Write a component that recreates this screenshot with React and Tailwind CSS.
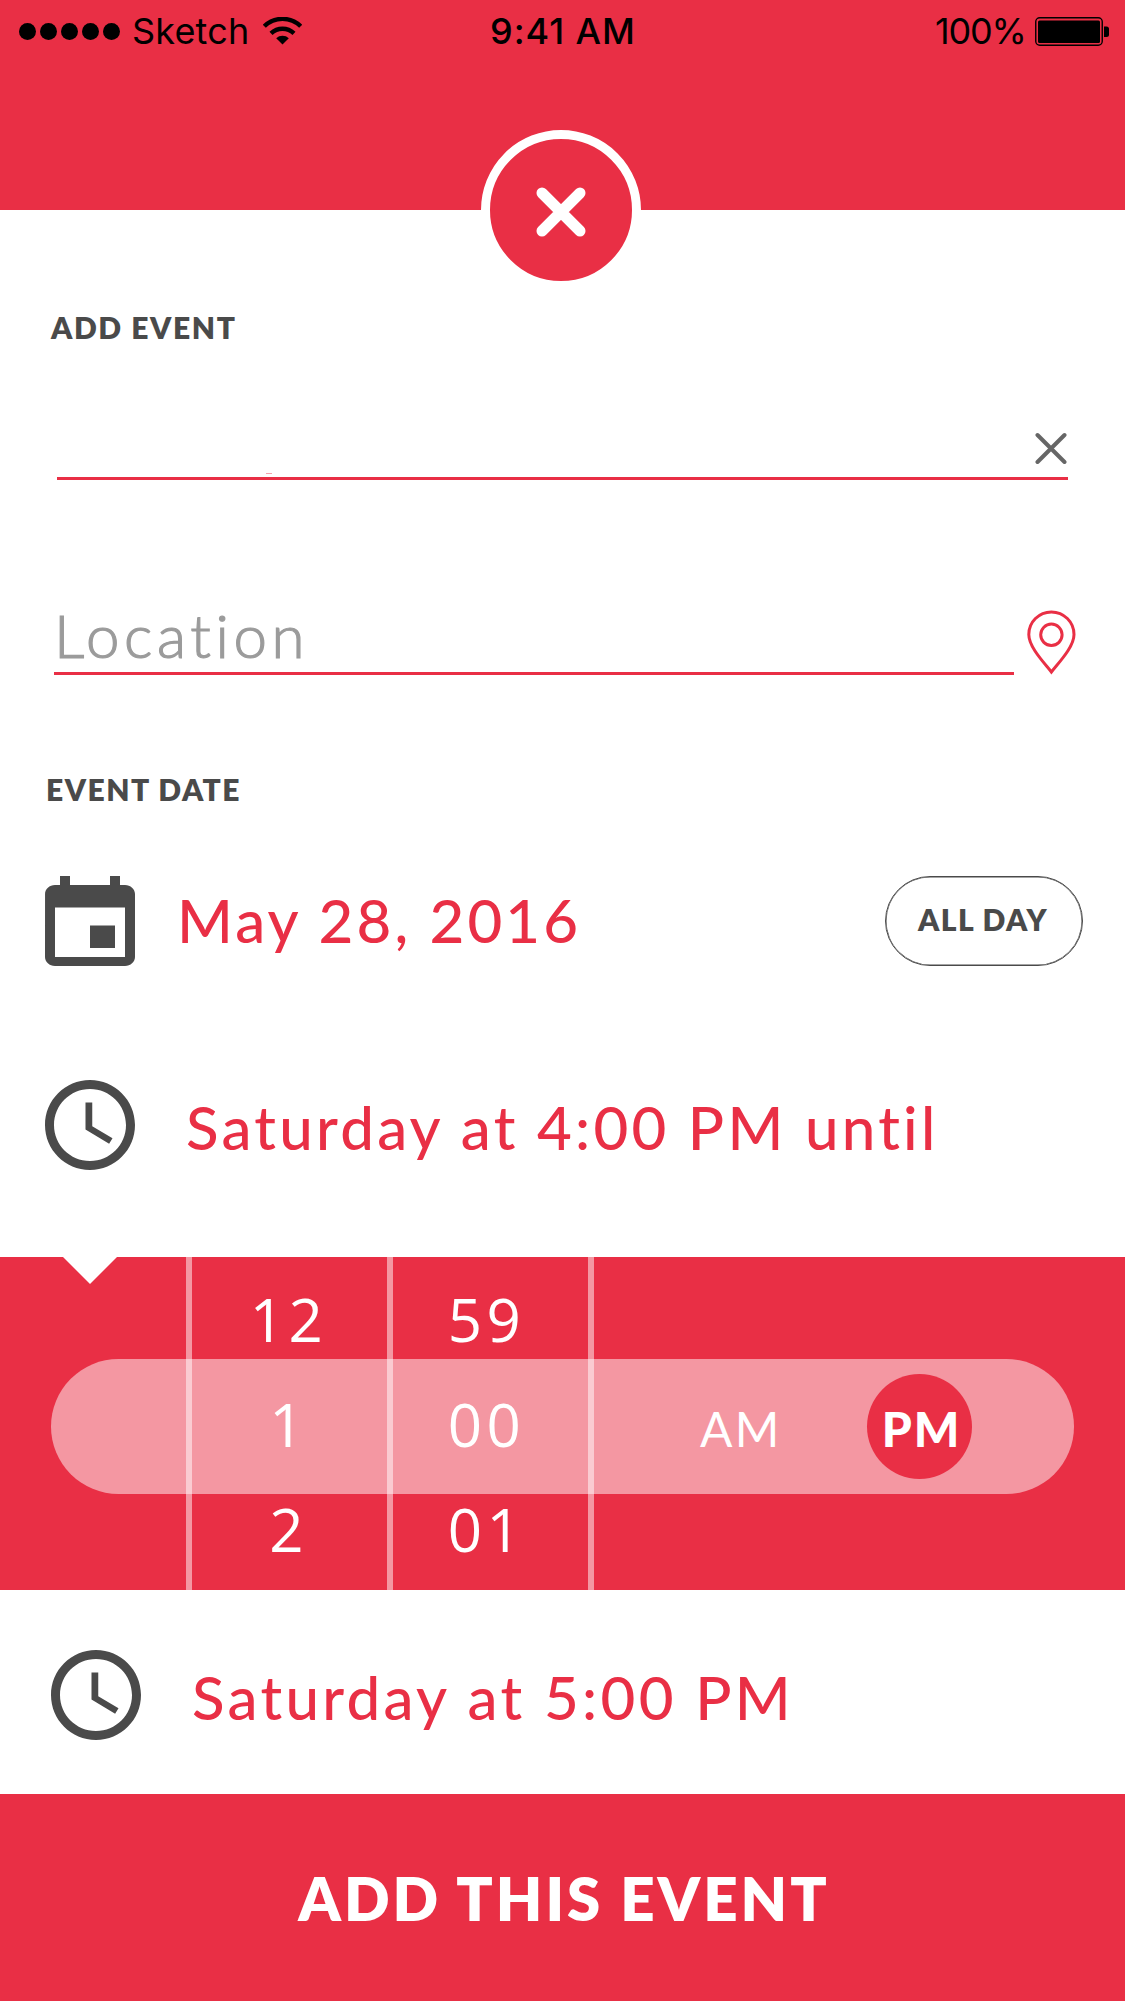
import React from "react";

const LATO = "font-['Lato','Open_Sans',sans-serif]";

function Wifi() {
  return (
    <svg className="h-[28px] w-[39px]" viewBox="0 0 39 28" fill="none">
      <path d="M1.3 9.3a26 26 0 0 1 36.4 0" stroke="#000" strokeWidth="4.4" />
      <path d="M8 16.3a16.8 16.8 0 0 1 23 0" stroke="#000" strokeWidth="4.4" />
      <path d="M13.2 21.2a9.4 9.4 0 0 1 12.6 0L19.5 27.5z" fill="#000" />
    </svg>
  );
}

function Battery() {
  return (
    <svg className="h-[29px] w-[75px]" viewBox="0 0 75 29">
      <rect x="0.75" y="0.75" width="66.5" height="27.5" rx="4" fill="none" stroke="#000" strokeWidth="1.4" />
      <rect x="3" y="3.5" width="62" height="22.5" rx="1.5" />
      <path d="M69 9.5h2.5a2.5 2.5 0 0 1 2.5 2.5v5.5a2.5 2.5 0 0 1-2.5 2.5H69z" />
    </svg>
  );
}

function Clock() {
  return (
    <svg className="size-[90px] shrink-0 fill-[#4a4a4a]" viewBox="2 2 20 20">
      <path d="M11.99 2C6.47 2 2 6.48 2 12s4.47 10 9.99 10C17.52 22 22 17.52 22 12S17.52 2 11.99 2zM12 20c-4.42 0-8-3.58-8-8s3.58-8 8-8 8 3.58 8 8-3.58 8-8 8zm.5-13H11v6l5.25 3.15.75-1.23-4.5-2.67z" />
    </svg>
  );
}

function Calendar() {
  return (
    <svg className="size-[90px] shrink-0 fill-[#4a4a4a]" viewBox="3 1 18 20" preserveAspectRatio="none">
      <path d="M17 12h-5v5h5v-5zM16 1v2H8V1H6v2H5c-1.11 0-1.99.9-1.99 2L3 19c0 1.1.89 2 2 2h14c1.1 0 2-.9 2-2V5c0-1.1-.9-2-2-2h-1V1h-2zm3 18H5V8h14v11z" />
    </svg>
  );
}

function PickerColumn({ values, className }) {
  return (
    <div
      className={`flex w-[201px] flex-col items-center gap-[45px] border-l-6 border-white/50 pt-[32px] font-['Open_Sans',sans-serif] text-[60px] leading-none font-medium tracking-[4.4px] ${className}`}
    >
      {values.map((v) => (
        <span key={v} className="relative">{v}</span>
      ))}
    </div>
  );
}

export default function App() {
  return (
    <div className={`flex h-[2001px] w-[1125px] flex-col overflow-hidden bg-white text-[#4a4a4a] ${LATO}`}>
      <header className="relative h-[210px] bg-[#e92f45]">
        <div className="grid h-[62px] grid-cols-[490px_445px_1fr] items-center font-['Inter',sans-serif] text-[36px] leading-none text-black">
          <div className="flex items-center pl-[19px]">
            <div className="flex gap-1">
              {[0, 1, 2, 3, 4].map((i) => (
                <span key={i} className="size-[17px] rounded-full bg-black" />
              ))}
            </div>
            <span className="ml-[12px] w-[131px] tracking-[0.19px]">Sketch</span>
            <Wifi />
          </div>
          <span className="font-medium tracking-[0.95px]">9:41 AM</span>
          <div className="flex items-center">
            <span className="w-[100px] tracking-[-1.19px]">100%</span>
            <Battery />
          </div>
        </div>
        <button className="absolute top-[130px] left-[481px] flex size-[160px] items-center justify-center rounded-full border-9 border-white bg-[#e92f45]">
          <svg className="mt-[3px] size-[50px]" viewBox="0 0 50 50" stroke="#fff" strokeWidth="11" strokeLinecap="round">
            <path d="M6 6l38 38M44 6L6 44" />
          </svg>
        </button>
      </header>

      <main className="h-[1047px] pt-[102px]">
        <h1 className="pl-[51px] text-[30px] leading-none font-extrabold tracking-[1.6px]">ADD EVENT</h1>
        <div className="ml-[57px] flex h-[138px] w-[1011px] items-end justify-between border-b-3 border-[#e92f45]">
          <span className="mb-[3px] ml-[209px] h-px w-[6px] bg-[#f4a3ad]" />
          <svg className="mr-px mb-[13px] size-[32px]" viewBox="0 0 32 32" stroke="#666" strokeWidth="4" strokeLinecap="round">
            <path d="M2.5 3l27 27M29.5 3l-27 27" />
          </svg>
        </div>
        <div className="flex h-[195px] items-end pl-[54px]">
          <div className="w-[960px] border-b-3 border-[#e92f45] pb-[7px] text-[60px] leading-none font-light tracking-[4.6px] text-[#9b9b9b] [-webkit-text-stroke:1.2px_#9b9b9b]">
            Location
          </div>
          <svg className="ml-[13px] h-[65px] w-[49px]" viewBox="0 0 49 65" fill="none" stroke="#e92f45" strokeWidth="3">
            <path d="M24.4 62C17 52.500 1.800 37 1.800 24.500a22.600 22.600 0 0 1 45.200 0C47 37 31.800 52.500 24.400 62z" />
            <circle cx="24.400" cy="24.800" r="10.700" />
          </svg>
        </div>
        <h2 className="mt-[99px] pl-[46px] text-[30px] leading-none font-extrabold tracking-[1.5px]">EVENT DATE</h2>
        <div className="mt-[72px] flex h-[90px] items-start pr-[42px] pl-[45px]">
          <Calendar />
          <span className="mt-[14px] ml-[42px] text-[60px] leading-none font-medium tracking-[3.12px] text-[#e92f45]">
            May 28, 2016
          </span>
          <button className="ml-auto flex h-[90px] w-[198px] items-center justify-center rounded-full border border-[#4a4a4a] pr-[2px] pb-[5px] text-[30px] leading-none font-extrabold tracking-[1.4px] shadow-[inset_0_0_0_0.5px_#4a4a4a]">
            ALL DAY
          </button>
        </div>
        <div className="mt-[114px] flex h-[90px] items-start pl-[45px]">
          <Clock />
          <span className="mt-[17px] ml-[51px] text-[60px] leading-none font-medium tracking-[3.24px] whitespace-nowrap text-[#e92f45]">
            Saturday at 4:00 PM until
          </span>
        </div>
      </main>

      <section className="relative flex h-[333px] bg-[#e92f45] text-white">
        <div className="absolute top-[102px] left-[51px] h-[135px] w-[1023px] rounded-full bg-white/50" />
        <div className="w-[186px] pl-[63px]">
          <svg className="h-[27px] w-[54px]" viewBox="0 0 54 27" fill="#fff">
            <path d="M0 0h54L27 27z" />
          </svg>
        </div>
        <PickerColumn values={["12", "1", "2"]} className="pr-[2px]" />
        <PickerColumn values={["59", "00", "01"]} className="pr-[8px]" />
        <div className="relative flex flex-1 items-center border-l-6 border-white/50 pt-[6px] pl-[106px] text-[48px] leading-none">
          <span className="mt-[4px] w-[167px] tracking-[2.2px]">AM</span>
          <span className="flex size-[105px] items-center justify-center rounded-full bg-[#e92f45] pt-[4px] pl-[4px] font-black tracking-[1.9px]">
            PM
          </span>
        </div>
      </section>

      <section className="flex h-[204px] items-start pt-[60px] pl-[51px]">
        <Clock />
        <span className="mt-[17px] ml-[51px] text-[60px] leading-none font-medium tracking-[3.32px] whitespace-nowrap text-[#e92f45]">
          Saturday at 5:00 PM
        </span>
      </section>

      <button className="flex h-[207px] items-start justify-center bg-[#e92f45] pt-[74px] pl-[3px] text-[60px] leading-none font-extrabold tracking-[3px] text-white">
        ADD THIS EVENT
      </button>
    </div>
  );
}
